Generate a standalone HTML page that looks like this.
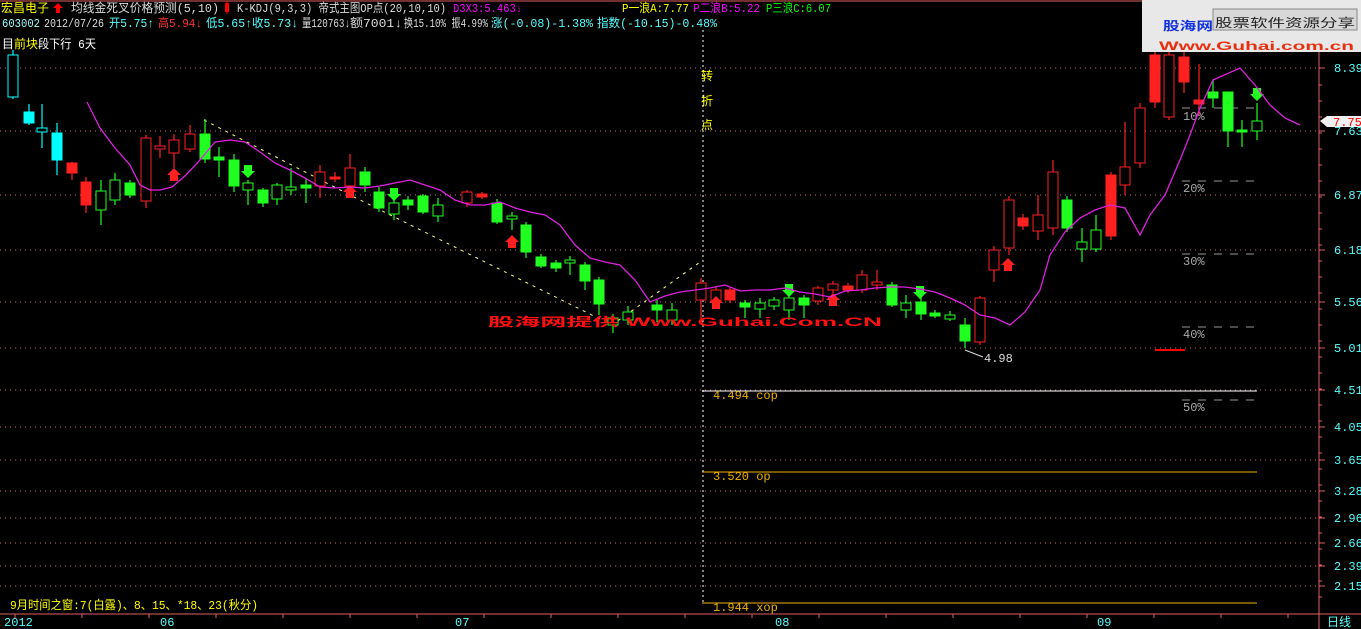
<!DOCTYPE html>
<html><head><meta charset="utf-8"><style>
body{margin:0;background:#000;overflow:hidden}
svg{display:block}
text{font-family:"Liberation Mono","Noto Sans CJK SC",monospace;font-size:12px}
.cn{font-family:"Liberation Sans","Noto Sans CJK SC",sans-serif}
</style></head><body>
<svg id="s" width="1361" height="629" xmlns="http://www.w3.org/2000/svg">
<rect width="1361" height="629" fill="#000"/>
<g id="grid"></g>
<line x1="1319" y1="0" x2="1319" y2="629" stroke="#e06060"/>
<line x1="0" y1="614" x2="1361" y2="614" stroke="#e06060"/>
<line x1="0" y1="1" x2="1150" y2="1" stroke="#e06060"/>
<g id="axis"></g>
<line x1="702" y1="391" x2="1257" y2="391" stroke="#fff"/>
<line x1="702" y1="472" x2="1257" y2="472" stroke="#f0b000"/>
<line x1="702" y1="603" x2="1257" y2="603" stroke="#f0b000"/>
<line x1="703" y1="30" x2="703" y2="605" stroke="#fff" stroke-dasharray="2,3"/>
<text x="713" y="399" fill="#f0b000" font-size="10">4.494 cop</text>
<text x="713" y="480" fill="#f0b000" font-size="10">3.520  op</text>
<text x="713" y="611" fill="#f0b000" font-size="10">1.944 xop</text>
<text x="701" y="80" fill="#ffff00" class="cn">转</text>
<text x="701" y="105" fill="#ffff00" class="cn">折</text>
<text x="701" y="129" fill="#ffff00" class="cn">点</text>
<g stroke="#999" stroke-dasharray="8,8"><line x1="1182" y1="108" x2="1262" y2="108"/><line x1="1182" y1="181" x2="1262" y2="181"/><line x1="1182" y1="254" x2="1262" y2="254"/><line x1="1182" y1="327" x2="1262" y2="327"/><line x1="1182" y1="400" x2="1262" y2="400"/></g>
<g fill="#aaa" font-size="11"><text x="1183" y="120">10%</text><text x="1183" y="192">20%</text><text x="1183" y="265">30%</text><text x="1183" y="338">40%</text><text x="1183" y="411">50%</text></g>
<line x1="1155" y1="350" x2="1185" y2="350" stroke="#f00" stroke-width="2"/>
<polyline points="204,120 350,195 612,325 703,260" fill="none" stroke="#ffff80" stroke-dasharray="3,5"/>
<g id="c"></g>
<polyline fill="none" stroke="#e020e0" stroke-width="1.3" points="87,102 100,128 115,148 130,165 140,185 150,190 160,190 172,187 186,175 200,160 215,142 230,140 245,142 260,152 275,163 290,170 305,178 320,187 335,188 350,187 365,188 380,186 395,183 410,180 425,185 440,190 455,200 470,205 485,205 500,202 515,208 530,212 545,215 560,225 575,245 590,258 605,262 620,265 635,280 650,302 665,296 680,292 695,290 710,288 725,285 740,291 755,290 770,290 785,288 800,292 815,294 830,297 845,291 860,290 875,288 890,287 905,287 920,289 935,292 950,298 965,305 980,315 995,318 1010,325 1025,312 1040,290 1050,255 1065,232 1080,218 1095,210 1110,205 1125,208 1140,235 1150,215 1165,195 1180,160 1190,135 1200,108 1213,80 1240,68 1255,85 1270,105 1285,118 1300,125"/>
<text x="984" y="362" fill="#ddd" font-size="11">4.98</text>
<line x1="965" y1="350" x2="983" y2="357" stroke="#ddd"/>
<g class="cn" font-size="12" lengthAdjust="spacingAndGlyphs">
<text x="1" y="12" fill="#ffff00" textLength="48" lengthAdjust="spacingAndGlyphs">宏昌电子</text>
<polygon points="58,3 63,8 60,8 60,13 56,13 56,8 53,8" fill="#f00"/>
<text x="71" y="12" fill="#ddd" textLength="148" lengthAdjust="spacingAndGlyphs">均线金死叉价格预测(5,10)</text>
<rect x="225" y="3" width="4" height="9" fill="#f00"/>
<line x1="227" y1="1" x2="227" y2="14" stroke="#f00"/>
<text x="237" y="12" fill="#ddd" textLength="209" lengthAdjust="spacingAndGlyphs">K-KDJ(9,3,3) 帝式主图OP点(20,10,10)</text>
<text x="453" y="12" fill="#ff00ff" textLength="69" lengthAdjust="spacingAndGlyphs">D3X3:5.463↓</text>
<text x="622" y="12" fill="#ffff00" textLength="67" lengthAdjust="spacingAndGlyphs">P一浪A:7.77</text>
<text x="693" y="12" fill="#ff00ff" textLength="67" lengthAdjust="spacingAndGlyphs">P二浪B:5.22</text>
<text x="766" y="12" fill="#00ff00" textLength="65" lengthAdjust="spacingAndGlyphs">P三浪C:6.07</text>
<text x="2" y="27" fill="#9ff" textLength="38" lengthAdjust="spacingAndGlyphs">603002</text>
<text x="44" y="27" fill="#ddd" textLength="60" lengthAdjust="spacingAndGlyphs">2012/07/26</text>
<text x="109" y="27" fill="#5ff" textLength="45" lengthAdjust="spacingAndGlyphs">开5.75↑</text>
<text x="158" y="27" fill="#f33" textLength="44" lengthAdjust="spacingAndGlyphs">高5.94↓</text>
<text x="206" y="27" fill="#5ff" textLength="92" lengthAdjust="spacingAndGlyphs">低5.65↑收5.73↓</text>
<text x="302" y="27" fill="#ddd" textLength="48" lengthAdjust="spacingAndGlyphs">量120763↓</text>
<text x="350" y="27" fill="#ddd" textLength="52" lengthAdjust="spacingAndGlyphs">额7001↓</text>
<text x="404" y="27" fill="#ddd" textLength="84" lengthAdjust="spacingAndGlyphs">换15.10% 振4.99%</text>
<text x="491" y="27" fill="#5ff" textLength="102" lengthAdjust="spacingAndGlyphs">涨(-0.08)-1.38%</text>
<text x="597" y="27" fill="#5ff" textLength="120" lengthAdjust="spacingAndGlyphs">指数(-10.15)-0.48%</text>
<text x="2" y="48" fill="#fff">目</text>
<text x="14" y="48" fill="#ff0">前块</text>
<text x="38" y="48" fill="#fff" textLength="58" lengthAdjust="spacingAndGlyphs">段下行 6天</text>
<text x="10" y="609" fill="#ffff00" font-size="11" textLength="248" lengthAdjust="spacingAndGlyphs">9月时间之窗:7(白露)、8、15、*18、23(秋分)</text>
</g>
<rect x="1142" y="0" width="219" height="52" fill="#e8e8e8"/>
<text x="1163" y="30" class="cn" font-size="23" font-weight="bold" fill="#1030e0" textLength="50" lengthAdjust="spacingAndGlyphs">股海网</text>
<rect x="1213" y="9" width="144" height="21" fill="#d8d8d8" stroke="#888"/>
<text x="1215" y="27" class="cn" font-size="17" fill="#222" textLength="140" lengthAdjust="spacingAndGlyphs">股票软件资源分享</text>
<text x="1159" y="50" class="cn" font-size="21" font-weight="bold" fill="#e83010" textLength="195" lengthAdjust="spacingAndGlyphs">Www.Guhai.com.cn</text>
<text x="488" y="326" class="cn" font-size="22" font-weight="bold" fill="#ff1010" textLength="394" lengthAdjust="spacingAndGlyphs">股海网提供 Www.Guhai.Com.CN</text>
<g fill="#5ff" font-size="11"><text x="4" y="626">2012</text><text x="160" y="626">06</text><text x="455" y="626">07</text><text x="775" y="626">08</text><text x="1097" y="626">09</text></g>
<text x="1327" y="626" fill="#5ff" class="cn" font-size="12">日线</text>
<g id="bt" stroke="#e06060"></g>
<polygon points="1320,121 1327,116 1361,116 1361,127 1327,127" fill="#f0f0f0"/>
<text x="1333" y="126" fill="#f00" font-size="12">7.75</text>
</svg>
<script>
var ns="http://www.w3.org/2000/svg";
function el(p,t,a){var e=document.createElementNS(ns,t);for(var k in a)e.setAttribute(k,a[k]);p.appendChild(e);return e;}
var grid=document.getElementById('grid'),axis=document.getElementById('axis');
var lv=[[68,"8.39"],[131,"7.63"],[195,"6.87"],[250,"6.18"],[302,"5.56"],[348,"5.01"],[390,"4.51"],[427,"4.05"],[460,"3.65"],[491,"3.28"],[518,"2.96"],[543,"2.66"],[566,"2.39"],[586,"2.15"]];
lv.forEach(function(l){el(grid,'line',{x1:0,y1:l[0],x2:1318,y2:l[0],stroke:'#c07070','stroke-dasharray':'1,4'});
el(axis,'line',{x1:1319,y1:l[0],x2:1325,y2:l[0],stroke:'#e06060'});
var t=el(axis,'text',{x:1334,y:l[0]+4,fill:'#5ff','font-size':11});t.textContent=l[1];});
for(var y=85;y<600;y+=16)el(axis,'line',{x1:1319,y1:y,x2:1322,y2:y,stroke:'#e06060'});
var bt=document.getElementById('bt');
for(var x=15;x<1320;x+=67)el(bt,'line',{x1:x,y1:614,x2:x,y2:618});
var C=[[13,55,97,50,99,'c',1],[29,112,123,104,125,'c',0],[42,128,132,104,148,'c',1],[57,133,160,123,175,'c',0],[72,163,173,162,180,'r',0],[86,182,205,177,213,'r',0],[101,191,210,180,225,'g',1],[115,180,200,173,205,'g',1],[130,183,195,180,198,'g',0],[146,138,201,135,208,'r',1],[160,146,149,136,158,'r',1],[174,140,153,134,168,'r',1],[190,134,149,125,152,'r',1],[205,134,159,119,163,'g',0],[219,157,160,147,177,'g',0],[234,160,186,154,192,'g',0],[248,183,190,180,205,'g',1],[263,190,203,188,207,'g',0],[277,185,199,183,205,'g',1],[291,187,190,168,195,'g',1],[306,185,188,178,203,'g',0],[320,172,186,165,198,'r',1],[335,177,179,172,182,'r',0],[350,168,186,154,190,'r',1],[365,172,185,167,192,'g',0],[379,192,208,187,212,'g',0],[394,203,214,188,220,'g',1],[408,200,205,196,210,'g',0],[423,196,212,194,214,'g',0],[438,205,216,198,222,'g',1],[467,192,203,190,207,'r',1],[482,194,197,192,199,'r',0],[497,203,222,199,224,'g',0],[512,216,219,212,230,'g',1],[526,225,252,222,258,'g',0],[541,257,266,254,268,'g',0],[556,263,268,260,272,'g',0],[570,260,263,256,275,'g',1],[585,265,281,262,290,'g',0],[599,280,304,277,315,'g',0],[613,318,325,314,333,'g',1],[628,312,320,306,325,'g',1],[657,305,310,300,322,'g',0],[672,310,320,303,325,'g',1],[701,283,300,278,320,'r',1],[716,290,301,287,307,'r',1],[730,290,300,287,303,'r',0],[745,303,307,300,318,'g',0],[760,303,309,298,318,'g',1],[774,300,306,297,310,'g',1],[789,298,310,295,320,'g',1],[804,298,305,295,318,'g',0],[818,288,301,286,305,'r',1],[833,284,290,281,293,'r',1],[848,286,290,283,293,'r',0],[862,275,290,270,293,'r',1],[877,282,285,270,290,'r',1],[892,285,305,282,307,'g',0],[906,303,310,295,318,'g',1],[921,302,314,297,320,'g',0],[935,313,316,310,318,'g',0],[950,315,319,311,321,'g',1],[965,325,341,318,348,'g',0],[980,298,342,296,345,'r',1],[994,250,270,246,282,'r',1],[1009,200,248,196,255,'r',1],[1023,218,226,214,230,'r',0],[1038,215,231,195,240,'r',1],[1053,172,228,160,235,'r',1],[1067,200,228,196,232,'g',0],[1082,242,249,228,262,'g',1],[1096,230,249,215,252,'g',1],[1111,175,236,172,240,'r',0],[1125,167,185,122,195,'r',1],[1140,108,163,103,168,'r',1],[1155,55,102,40,108,'r',0],[1169,55,117,50,120,'r',1],[1184,57,82,50,93,'r',0],[1199,100,104,64,115,'r',0],[1213,92,98,80,108,'g',0],[1228,92,131,92,147,'g',0],[1242,130,131,120,147,'g',0],[1257,121,131,103,140,'g',1]];
var col={r:'#ff2020',g:'#20ff20',c:'#00ffff'};
var cg=document.getElementById('c');
C.forEach(function(k){var c=col[k[5]];
el(cg,'line',{x1:k[0],y1:k[3],x2:k[0],y2:k[4],stroke:c,'stroke-width':1.2});
el(cg,'rect',{x:k[0]-5,y:k[1],width:10,height:Math.max(2,k[2]-k[1]),fill:k[6]?'#000':c,stroke:c,'stroke-width':1});});
function arr(x,y,c,down){var p=down?[[x-4,y],[x+4,y],[x+4,y+6],[x+7,y+6],[x,y+13],[x-7,y+6],[x-4,y+6]]:[[x-4,y+13],[x+4,y+13],[x+4,y+7],[x+7,y+7],[x,y],[x-7,y+7],[x-4,y+7]];
el(cg,'polygon',{points:p.map(function(q){return q.join(',')}).join(' '),fill:c});}
[[174,168],[350,185],[512,235],[716,296],[833,293],[1008,258]].forEach(function(a){arr(a[0],a[1],'#ff2020',0)});
[[248,165],[394,188],[789,284],[920,286],[1257,88]].forEach(function(a){arr(a[0],a[1],'#20ff20',1)});
</script>
</body></html>
